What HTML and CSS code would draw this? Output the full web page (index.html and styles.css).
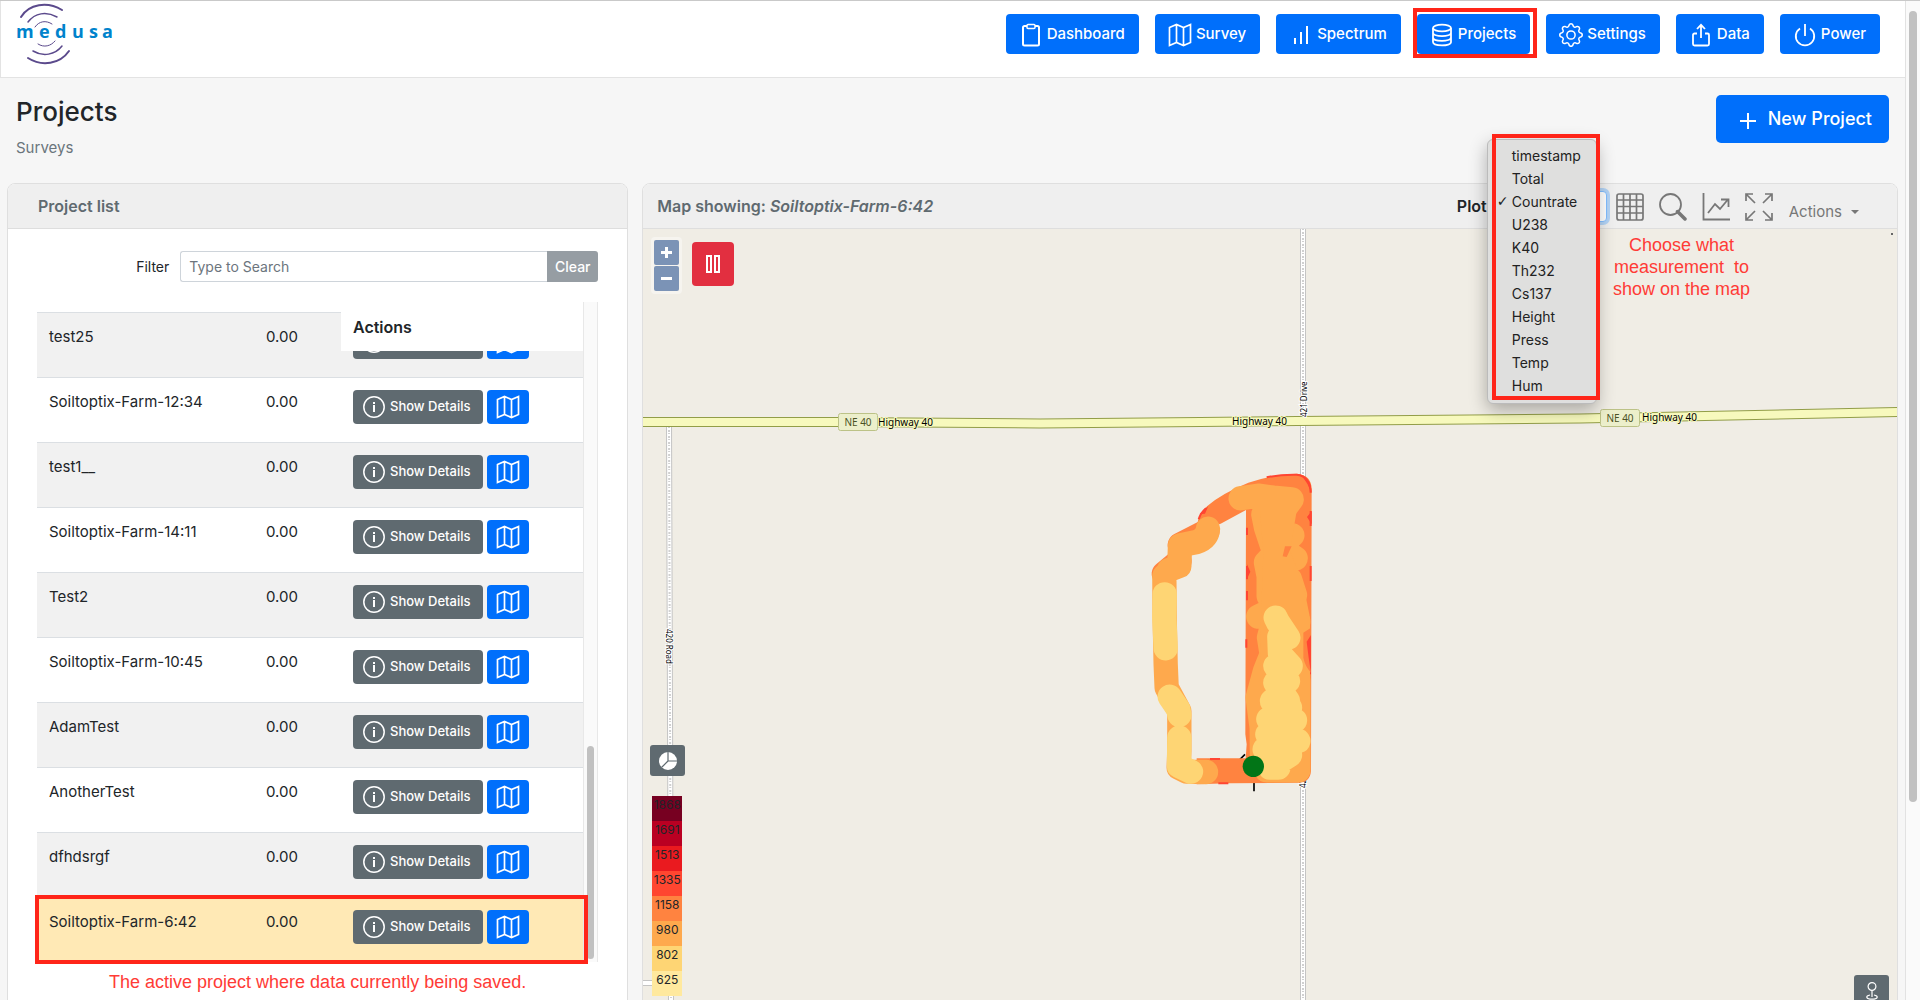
FILE: index.html
```html
<!DOCTYPE html>
<html lang="en">
<head>
<meta charset="utf-8">
<title>Projects</title>
<link rel="stylesheet" href="styles.css">
</head>
<body>
<svg width="0" height="0" class="defs" aria-hidden="true">
  <symbol id="i-map" viewBox="0 0 24 24"><path d="M1.5 4.5 8.5 1.5 15.5 4.5 22.500 1.500V19.500L15.500 22.500 8.500 19.500 1.500 22.500ZM8.500 1.500V19.500M15.500 4.500V22.500" fill="none" stroke="currentColor" stroke-width="1.700"/></symbol>
  <symbol id="i-info" viewBox="0 0 22 22"><circle cx="11" cy="11" r="10.200" fill="none" stroke="currentColor" stroke-width="1.500"/><path d="M10 9h2v7h-2zM10 6h2v2h-2z" fill="currentColor"/></symbol>
</svg>
<div class="window">
<div class="page">
  <header class="topbar">
    <a href="#" class="logo" aria-label="medusa">
      <svg width="104" height="64" viewBox="12 2 104 64">
        <g fill="none" stroke="#5b4a8c" stroke-linecap="round">
          <path d="M21 17C29 4 47 1 62 10" stroke-width="2"/>
          <path d="M28 22C35 13 46 11 57 17" stroke-width="1.500"/>
          <path d="M35 27C39 21 46 20 52 24" stroke-width="1"/>
          <path d="M38 44C44 48 51 46 55 41" stroke-width="1"/>
          <path d="M33 51C43 57 55 55 62 46" stroke-width="1.500"/>
          <path d="M28 58C42 67 60 64 69 51" stroke-width="2"/>
        </g>
        <text class="logo-text" x="16 39 55 72 89 102" y="38">medusa</text>
      </svg>
    </a>
    <nav class="nav">
      <a href="#" class="btn nav-btn"><svg width="24" height="24" viewBox="0 0 24 24"><path d="M8 3H5.500A1.500 1.500 0 0 0 4 4.500V21a1.500 1.500 0 0 0 1.500 1.500h13A1.500 1.500 0 0 0 20 21V4.500A1.500 1.500 0 0 0 18.500 3H16" fill="none" stroke="currentColor" stroke-width="2"/><rect x="8" y="1.500" width="8" height="4" rx="1" fill="none" stroke="currentColor" stroke-width="1.500"/></svg><span>Dashboard</span></a>
      <a href="#" class="btn nav-btn"><svg width="24" height="24"><use href="#i-map"/></svg><span>Survey</span></a>
      <a href="#" class="btn nav-btn"><svg width="24" height="24" viewBox="0 0 24 24"><path d="M6 15v6M12 9v12M18 3v18" stroke="currentColor" stroke-width="2"/></svg><span>Spectrum</span></a>
      <div class="nav-current">
        <a href="#" class="btn nav-btn"><svg width="24" height="24" viewBox="0 0 24 24"><g fill="none" stroke="currentColor" stroke-width="1.800"><ellipse cx="12" cy="5" rx="9" ry="3.400"/><path d="M3 5v14c0 4.500 18 4.500 18 0V5M3 9.700c0 4.500 18 4.500 18 0M3 14.400c0 4.500 18 4.500 18 0"/></g></svg><span>Projects</span></a>
        <span class="mark mark-nav"></span>
      </div>
      <a href="#" class="btn nav-btn"><svg width="24" height="24" viewBox="0 0 16 16" fill="currentColor"><path d="M8 4.754a3.246 3.246 0 1 0 0 6.492 3.246 3.246 0 0 0 0-6.492zM5.754 8a2.246 2.246 0 1 1 4.492 0 2.246 2.246 0 0 1-4.492 0z"/><path d="M9.796 1.343c-.527-1.790-3.065-1.790-3.592 0l-.094.319a.873.873 0 0 1-1.255.52l-.292-.16c-1.640-.892-3.433.902-2.540 2.541l.159.292a.873.873 0 0 1-.52 1.255l-.319.094c-1.790.527-1.790 3.065 0 3.592l.319.094a.873.873 0 0 1 .52 1.255l-.16.292c-.892 1.640.901 3.434 2.541 2.540l.292-.159a.873.873 0 0 1 1.255.52l.094.319c.527 1.790 3.065 1.790 3.592 0l.094-.319a.873.873 0 0 1 1.255-.52l.292.16c1.640.893 3.434-.902 2.540-2.541l-.159-.292a.873.873 0 0 1 .52-1.255l.319-.094c1.790-.527 1.790-3.065 0-3.592l-.319-.094a.873.873 0 0 1-.52-1.255l.16-.292c.893-1.640-.902-3.433-2.541-2.540l-.292.159a.873.873 0 0 1-1.255-.52l-.094-.319zm-2.633.283c.246-.835 1.428-.835 1.674 0l.094.319a1.873 1.873 0 0 0 2.693 1.115l.291-.16c.764-.415 1.600.42 1.184 1.185l-.159.292a1.873 1.873 0 0 0 1.116 2.692l.318.094c.835.246.835 1.428 0 1.674l-.319.094a1.873 1.873 0 0 0-1.115 2.693l.16.291c.415.764-.42 1.600-1.185 1.184l-.291-.159a1.873 1.873 0 0 0-2.693 1.116l-.094.318c-.246.835-1.428.835-1.674 0l-.094-.319a1.873 1.873 0 0 0-2.692-1.115l-.292.16c-.764.415-1.600-.42-1.184-1.185l.159-.291A1.873 1.873 0 0 0 1.945 8.930l-.319-.094c-.835-.246-.835-1.428 0-1.674l.319-.094A1.873 1.873 0 0 0 3.060 4.377l-.16-.292c-.415-.764.42-1.600 1.185-1.184l.292.159a1.873 1.873 0 0 0 2.692-1.115l.094-.319z"/></svg><span>Settings</span></a>
      <a href="#" class="btn nav-btn"><svg width="24" height="24" viewBox="0 0 24 24"><path d="M8 10.500H5.500A1.500 1.500 0 0 0 4 12v9a1.500 1.500 0 0 0 1.500 1.500h13A1.500 1.500 0 0 0 20 21v-9a1.500 1.500 0 0 0-1.500-1.500H16M12 15V2M8 6l4-4.200L16 6" fill="none" stroke="currentColor" stroke-width="1.800"/></svg><span>Data</span></a>
      <a href="#" class="btn nav-btn"><svg width="24" height="24" viewBox="0 0 24 24"><path d="M7 5.500A9.200 9.200 0 1 0 17 5.500M12 1v12" fill="none" stroke="currentColor" stroke-width="1.800"/></svg><span>Power</span></a>
    </nav>
  </header>

  <div class="title-row">
    <div>
      <h1>Projects</h1>
      <p class="subtitle">Surveys</p>
    </div>
    <button type="button" class="btn new-btn"><svg width="24" height="24" viewBox="0 0 24 24"><path d="M12 4v16M4 12h16" stroke="currentColor" stroke-width="2"/></svg><span>New Project</span></button>
  </div>

  <main class="columns">
    <section class="card">
      <div class="card-head list-head"><h2>Project list</h2></div>
      <div class="list-body">
        <form class="filter">
          <label for="filter">Filter</label>
          <input id="filter" type="text" placeholder="Type to Search">
          <button type="button">Clear</button>
        </form>
        <div class="table-area">
          <div class="table-wrap">
            <table>
              <colgroup><col class="c-name"><col class="c-size"><col></colgroup>
              <thead><tr><td></td><td></td><th scope="col"><div class="sticky-head">Actions</div></th></tr></thead>
              <tbody>
                <tr><td>test25</td><td>0.00</td><td><div class="row-actions"><button type="button" class="details"><svg width="22" height="22"><use href="#i-info"/></svg><span>Show Details</span></button><button type="button" class="map-btn" aria-label="Map"><svg width="24" height="24"><use href="#i-map"/></svg></button></div></td></tr>
                <tr><td>Soiltoptix-Farm-12:34</td><td>0.00</td><td><div class="row-actions"><button type="button" class="details"><svg width="22" height="22"><use href="#i-info"/></svg><span>Show Details</span></button><button type="button" class="map-btn" aria-label="Map"><svg width="24" height="24"><use href="#i-map"/></svg></button></div></td></tr>
                <tr><td>test1__</td><td>0.00</td><td><div class="row-actions"><button type="button" class="details"><svg width="22" height="22"><use href="#i-info"/></svg><span>Show Details</span></button><button type="button" class="map-btn" aria-label="Map"><svg width="24" height="24"><use href="#i-map"/></svg></button></div></td></tr>
                <tr><td>Soiltoptix-Farm-14:11</td><td>0.00</td><td><div class="row-actions"><button type="button" class="details"><svg width="22" height="22"><use href="#i-info"/></svg><span>Show Details</span></button><button type="button" class="map-btn" aria-label="Map"><svg width="24" height="24"><use href="#i-map"/></svg></button></div></td></tr>
                <tr><td>Test2</td><td>0.00</td><td><div class="row-actions"><button type="button" class="details"><svg width="22" height="22"><use href="#i-info"/></svg><span>Show Details</span></button><button type="button" class="map-btn" aria-label="Map"><svg width="24" height="24"><use href="#i-map"/></svg></button></div></td></tr>
                <tr><td>Soiltoptix-Farm-10:45</td><td>0.00</td><td><div class="row-actions"><button type="button" class="details"><svg width="22" height="22"><use href="#i-info"/></svg><span>Show Details</span></button><button type="button" class="map-btn" aria-label="Map"><svg width="24" height="24"><use href="#i-map"/></svg></button></div></td></tr>
                <tr><td>AdamTest</td><td>0.00</td><td><div class="row-actions"><button type="button" class="details"><svg width="22" height="22"><use href="#i-info"/></svg><span>Show Details</span></button><button type="button" class="map-btn" aria-label="Map"><svg width="24" height="24"><use href="#i-map"/></svg></button></div></td></tr>
                <tr><td>AnotherTest</td><td>0.00</td><td><div class="row-actions"><button type="button" class="details"><svg width="22" height="22"><use href="#i-info"/></svg><span>Show Details</span></button><button type="button" class="map-btn" aria-label="Map"><svg width="24" height="24"><use href="#i-map"/></svg></button></div></td></tr>
                <tr><td>dfhdsrgf</td><td>0.00</td><td><div class="row-actions"><button type="button" class="details"><svg width="22" height="22"><use href="#i-info"/></svg><span>Show Details</span></button><button type="button" class="map-btn" aria-label="Map"><svg width="24" height="24"><use href="#i-map"/></svg></button></div></td></tr>
                <tr class="active"><td>Soiltoptix-Farm-6:42</td><td>0.00</td><td><div class="row-actions"><button type="button" class="details"><svg width="22" height="22"><use href="#i-info"/></svg><span>Show Details</span></button><button type="button" class="map-btn" aria-label="Map"><svg width="24" height="24"><use href="#i-map"/></svg></button></div></td></tr>
              </tbody>
            </table>
          </div>
          <div class="track"><div class="thumb"></div></div>
          <span class="mark mark-row"></span>
        </div>
        <p class="note">The active project where data currently being saved.</p>
      </div>
    </section>

    <section class="card">
      <div class="card-head map-head">
        <h2>Map showing: <em>Soiltoptix-Farm-6:42</em></h2>
        <div class="tools">
          <label for="plot">Plot</label>
          <div class="plot">
            <select id="plot"><option>Countrate</option></select>
            <ul class="menu">
              <li>timestamp</li><li>Total</li><li class="checked">Countrate</li><li>U238</li><li>K40</li><li>Th232</li><li>Cs137</li><li>Height</li><li>Press</li><li>Temp</li><li>Hum</li>
            </ul>
            <span class="mark mark-menu"></span>
          </div>
          <div class="tool-icons">
            <button type="button" aria-label="Table"><svg width="28" height="28" viewBox="0 0 28 28"><g fill="none" stroke="currentColor" stroke-width="1.700"><rect x="1" y="1" width="26" height="26" rx="2"/><path d="M1 7h26M1 13.500h26M1 20h26M7.500 1v26M14 1v26M20.500 1v26"/></g></svg></button>
            <button type="button" aria-label="Zoom"><svg width="28" height="28" viewBox="0 0 28 28"><circle cx="11.500" cy="11.500" r="10.500" fill="none" stroke="currentColor" stroke-width="1.800"/><path d="M18.500 18.500 26 26" stroke="currentColor" stroke-width="3.500" stroke-linecap="round"/></svg></button>
            <button type="button" aria-label="Chart"><svg width="28" height="28" viewBox="0 0 28 28"><path d="M1.500 0v26.500H28M6 20l7-9 5 5 7.500-9M19 6.500h7.500V14" fill="none" stroke="currentColor" stroke-width="1.800"/></svg></button>
            <button type="button" aria-label="Fullscreen"><svg width="28" height="28" viewBox="0 0 28 28"><path d="M1 8V1h7M1 1l9 9M20 1h7v7M27 1l-9 9M1 20v7h7M1 27l9-9M20 27h7v-7M27 27l-9-9" fill="none" stroke="currentColor" stroke-width="1.700"/></svg></button>
          </div>
          <button type="button" class="actions-menu">Actions</button>
        </div>
      </div>
      <div class="map">
        <svg class="map-svg" height="772" viewBox="643 228 1254 772" preserveAspectRatio="xMinYMin slice">
          <g class="lane">
            <path class="lane-edge" d="M1303 228V1000M669 420 671 1000M643 982h9"/>
            <path class="lane-fill" d="M1303 228V1000M669 420 671 1000M643 982h9"/>
            <path class="lane-dots" d="M1303 228V1000M669 420 671 1000"/>
          </g>
          <path d="M640 421 840 421 1040 422.500 1200 421 1580 417.500 1900 411" fill="none" stroke="#929d48" stroke-width="10"/>
          <path d="M640 421 840 421 1040 422.500 1200 421 1580 417.500 1900 411" fill="none" stroke="#f7f9bd" stroke-width="8"/>
          <g class="shield"><rect x="838.500" y="412.500" width="39" height="17" rx="2"/><rect x="1600.500" y="408.500" width="39" height="17" rx="2"/></g>
          <g class="shield-text"><text x="858" y="425">NE 40</text><text x="1620" y="421">NE 40</text></g>
          <g class="road-name">
            <text x="878" y="425">Highway 40</text><text x="1232" y="424">Highway 40</text><text x="1642" y="420">Highway 40</text>
          </g>
          <g class="lane-name">
            <text transform="translate(1307 416) rotate(-90)">421 Drive</text>
            <text transform="translate(666 628) rotate(90)">420 Road</text>
            <text transform="translate(1306 787) rotate(-90)">42</text>
          </g>
          <rect x="1891" y="232" width="2" height="2" fill="#666"/>
          <svg x="1130" y="450" width="220" height="360" viewBox="0 0 660 1080">
            <path d="M372 960V1021M345 910 325 930" stroke="#000" stroke-width="5"/>
            <path fill="#ff8340" d="M200 235Q200 195 232 165 270 130 355 95 430 70 500 68 545 72 545 115L543 960Q540 995 505 995L300 997 200 1000V922H347L350 880 346 850 348 177 272 218Z"/>
            <path fill="none" stroke="#ff4532" stroke-width="6" d="M206 205Q212 185 228 172M410 79Q450 70 500 71 540 75 542 125M542 180V225M542 345V390M351 230V252M351 345V385M351 420V448M349 565V590M540 550V670M240 924H270M265 997H295"/>
            <path fill="#ff4532" d="M208 190 235 165 225 188ZM515 73Q545 85 545 125Q535 100 515 73ZM545 180 531 198 545 220ZM351 340 361 362 351 384ZM542 555 529 572 542 640Z"/>
            <g fill="none" stroke="#ff8340" stroke-width="74" stroke-linecap="round" stroke-linejoin="round"><path d="M150 282 232 240M102 368 148 330"/></g>
            <g fill="none" stroke="#fea94d" stroke-width="73" stroke-linecap="round" stroke-linejoin="round">
              <path d="M234 233Q232 262 200 273L150 283 148 345 117 357M103 375 104 500 107 640 110 710 148 780 148 900 146 950 170 962 228 963"/>
              <path d="M332 142 384 134 430 140 485 145 465 172 400 190 408 230 428 290 487 253M497 322 450 290 408 335 416 375 416 435 480 385 495 432 440 470 385 497M505 512 430 510 417 560 425 610 405 660 383 740 395 830 396 930 410 958 505 958 505 690 480 560M505 850V958"/>
            </g>
            <path fill="#fea94d" d="M390 180H500L480 300 520 400 540 500V960H400L390 600 400 300Z"/>
            <path fill="#ff8340" d="M520 545 543 530V665Q525 645 520 620ZM465 286 485 286 470 318 458 316Z"/>
            <path fill="#ff4532" d="M543 552 530 572 536 620 543 668Z"/>
            <g fill="none" stroke="#fed574" stroke-width="73" stroke-linecap="round" stroke-linejoin="round">
              <path d="M104 430 103 500 107 592M119 737 145 775 148 792M148 860 147 945 183 962"/>
              <path d="M437 500 443 512 475 560 448 558 450 610 482 645 436 645 474 690 436 695 474 750 426 750 480 770 415 805 495 808 412 850 505 870 404 895 480 912 420 950 445 950"/>
            </g>
            <circle cx="370" cy="946" r="32" fill="#027517"/>
          </svg>
        </svg>
        <div class="zoom-ctl"><button type="button" aria-label="Zoom in"><svg width="11" height="11" viewBox="0 0 11 11"><path d="M0 5.500h11M5.500 0v11" stroke="#fff" stroke-width="3"/></svg></button><button type="button" aria-label="Zoom out"><svg width="11" height="11" viewBox="0 0 11 11"><path d="M0 5.500h11" stroke="#fff" stroke-width="3"/></svg></button></div>
        <button type="button" class="pause" aria-label="Pause"><svg width="14" height="18" viewBox="0 0 14 18"><path d="M1 1h4v16H1zM9 1h4v16H9z" fill="none" stroke="#fff" stroke-width="2"/></svg></button>
        <p class="note map-note">Choose what<br>measurement&nbsp; to<br>show on the map</p>
        <button type="button" class="grey-btn pie" aria-label="Legend"><svg width="18" height="18" viewBox="0 0 18 18"><circle cx="9" cy="9" r="9" fill="#fff"/><path d="M9 0v9h9M9 9 2.500 15.500" fill="none" stroke="#5f6a70" stroke-width="1.200"/></svg></button>
        <ol class="legend"><li>1868</li><li>1691</li><li>1513</li><li>1335</li><li>1158</li><li>980</li><li>802</li><li>625</li></ol>
        <button type="button" class="grey-btn pin" aria-label="Position"><svg width="12" height="18" viewBox="0 0 12 18"><g fill="none" stroke="#fff" stroke-width="1.200"><circle cx="6" cy="4.500" r="3.900"/><path d="M6 8.500V15M4 13C-1 14 0 17.200 6 17.200S13 14 8 13"/></g></svg></button>
      </div>
    </section>
  </main>
</div>
<div class="page-track"><div class="page-thumb"></div></div>
</div>
</body>
</html>
```
FILE: styles.css
```css
* { box-sizing: border-box; }
body {
  margin: 0;
  font: 16px/24px Inter, "Liberation Sans", sans-serif;
  color: #212529;
  background: #f6f6f6;
}
h1, h2, p, ul, ol { margin: 0; padding: 0; }
ul, ol { list-style: none; }
button, input, select { font: inherit; }
button { border: 0; padding: 0; cursor: pointer; }
svg { display: block; flex: none; }
.defs { position: absolute; }

.window { display: flex; height: 100vh; overflow: hidden; border-top: 1px solid #c9c9c9; }
.page { flex: 1; min-width: 0; }
.page-track { width: 15px; background: #fafafa; border-left: 1px solid #e2e2e2; padding: 10px 3px 0; }
.page-thumb { height: 80%; border-radius: 4px; background: #c1c1c1; }

.topbar {
  display: flex;
  justify-content: space-between;
  align-items: flex-start;
  height: 77px;
  padding: 1px 25px 0 11px;
  background: #fff;
  border-bottom: 1px solid #e3e3e3;
  border-left: 1px solid #e3e3e3;
}
.logo-text { font: bold 18px "Open Sans", sans-serif; fill: #0083cc; }
.nav { display: flex; gap: 16px; padding-top: 12px; }
.nav-current { position: relative; }
.btn {
  display: flex;
  align-items: center;
  color: #fff;
  background: #006ffb;
  border-radius: 4px;
  text-decoration: none;
  white-space: nowrap;
}
.nav-btn { height: 40px; padding: 0 14px 0 13px; gap: 4px; font-size: 15px; font-weight: 500; }
.nav-btn svg { margin-top: 2px; }
.nav-btn span { padding-bottom: 1px; }
.mark { position: absolute; border: 4px solid #ff2519; pointer-events: none; }
.mark-nav { inset: -6px -7px -4px -4px; }

.title-row {
  display: flex;
  justify-content: space-between;
  align-items: flex-start;
  height: 105px;
  padding: 17px 16px 0;
}
h1 { font-size: 26px; line-height: 34px; font-weight: 500; }
.subtitle { margin-top: 7px; font-size: 15px; color: #6a757c; }
.new-btn { height: 48px; padding: 0 17px 0 20px; gap: 8px; font-size: 18px; font-weight: 500; border-radius: 5px; }
.new-btn svg { margin-top: 4px; }

.columns { display: grid; grid-template-columns: 331fr 669fr; gap: 14px; padding: 0 7px; }
.card {
  min-width: 0;
  background: #fff;
  border: 1px solid #dfdfdf;
  border-radius: 8px 8px 0 0;
  min-height: 880px;
}
.card-head {
  display: flex;
  align-items: center;
  height: 45px;
  background: #efefef;
  border-bottom: 1px solid #dedede;
  border-radius: 7px 7px 0 0;
}
h2 { font-size: 16px; line-height: 24px; font-weight: 600; color: #5f6a70; }
.list-head { padding-left: 30px; }
.list-body { padding: 22px 29px 0; }

.filter { display: flex; font-size: 14px; justify-content: flex-end; }
.filter label { line-height: 31px; padding-right: 11px; }
.filter input {
  width: 367px;
  height: 31px;
  padding: 0 8px;
  border: 1px solid #ced4da;
  border-right: 0;
  border-radius: 3px 0 0 3px;
  background: #fff;
}
.filter input::placeholder { color: #6c757d; opacity: 1; }
.filter button { width: 51px; color: #fff; background: #969da3; border-radius: 0 3px 3px 0; font-weight: 500; }

.table-area { position: relative; display: flex; margin-top: 20px; }
.table-wrap { flex: 1; }
table { width: 100%; border-collapse: separate; border-spacing: 0; table-layout: fixed; }
.c-name { width: 217px; }
.c-size { width: 87px; }
thead td, thead th { height: 10px; padding: 0; position: relative; }
.sticky-head {
  position: absolute;
  z-index: 1;
  inset: 0 0 auto 0;
  height: 49px;
  padding: 13px 12px 0;
  text-align: left;
  font-size: 16px;
  font-weight: 600;
  background: #fff;
}
tbody td { height: 65px; padding: 12px; vertical-align: top; border-top: 1px solid #dbdfe3; font-size: 15px; white-space: nowrap; }
tbody tr:nth-child(odd) { background: #f1f1f1; }
tbody tr.active { background: #ffe9b5; }
.row-actions { display: flex; gap: 4px; }
.details, .map-btn { display: flex; align-items: center; height: 34px; border-radius: 4px; color: #fff; }
.details { width: 130px; padding: 0 10px; gap: 5px; font-size: 13px; font-weight: 500; background: #5f6a70; }
.details span { padding-bottom: 2px; }
.map-btn { width: 42px; justify-content: center; background: #006ffb; }
.track { width: 15px; background: #fafafa; border: 1px solid #e8e8e8; border-width: 0 1px; position: relative; }
.thumb { position: absolute; left: 3px; right: 3px; bottom: 3px; height: 213px; border-radius: 4px; background: #c1c1c1; }
.mark-row { left: -2px; right: 10px; bottom: -2px; height: 69px; }
.note { font: 18px/22px "Liberation Sans", sans-serif; color: #ff3b36; text-align: center; }
.list-body .note { margin-top: 9px; }

.map-head { justify-content: space-between; padding: 0 38px 0 14px; }
.tools { display: flex; align-items: center; }
.tools label { font-weight: 600; font-size: 16px; padding-right: 8px; }
.plot { position: relative; }
.plot select {
  display: block;
  width: 112px;
  height: 31px;
  border: 1px solid #80bdff;
  border-radius: 4px;
  background: #fff;
  color: #495057;
  appearance: none;
  box-shadow: 0 0 0 3px #b3d3f5;
}
.menu {
  position: absolute;
  z-index: 2;
  left: -8px;
  top: -52px;
  width: 110px;
  padding: 4px 0 6px;
  font-size: 14px;
  line-height: 23px;
  color: #222;
  background: #dfdfde;
  border: 1px solid #bbb;
  border-radius: 6px;
  box-shadow: 0 6px 18px rgba(0, 0, 0, .3);
}
.menu li { padding-left: 24px; position: relative; }
.menu .checked::before { content: "✓"; position: absolute; left: 9px; font-family: "DejaVu Sans", sans-serif; }
.mark-menu { z-index: 3; left: -3px; top: -57px; width: 108px; height: 266px; }
.tool-icons { display: flex; gap: 15px; padding: 2px 16px 0 9px; }
.tool-icons button, .actions-menu { background: none; color: #777; }
.actions-menu { display: flex; align-items: center; gap: 9px; font-size: 15px; padding-top: 11px; }
.actions-menu::after { content: ""; border: 4px solid transparent; border-top-color: #777; border-bottom: 0; }

.map { position: relative; height: 772px; background: #f0ede5; overflow: hidden; }
.map-svg { width: 100%; }
.lane path { fill: none; }
.lane .lane-edge { stroke: #c4c4c4; stroke-width: 6; }
.lane .lane-fill { stroke: #fff; stroke-width: 4; }
.lane .lane-dots { stroke: #d0d0d0; stroke-width: 2; stroke-dasharray: 1 2 2 1; }
.shield rect { fill: #ecefcb; stroke: #bcc287; }
.shield-text { font: 10px "Noto Sans", sans-serif; fill: #4b5224; text-anchor: middle; }
.road-name, .lane-name { font: 10px "Noto Sans", sans-serif; fill: #000; paint-order: stroke; stroke: #f7f9bd; stroke-width: 2px; }
.lane-name { font-size: 8px; stroke: #fff; }
.zoom-ctl { position: absolute; left: 8px; top: 8px; display: grid; gap: 1px; padding: 3px; background: rgba(255, 255, 255, .4); border-radius: 4px; }
.zoom-ctl button { width: 25px; height: 25px; display: grid; place-items: center; background: #7b93b6; border-radius: 2px; }
.pause { position: absolute; left: 49px; top: 13px; width: 42px; height: 44px; display: grid; place-items: center; background: #e22f40; border-radius: 4px; }
.map-note { position: absolute; right: 147px; top: 5px; white-space: nowrap; }
.grey-btn { position: absolute; width: 35px; height: 31px; display: grid; place-items: center; background: #5f6a70; border-radius: 3px; }
.pie { left: 7px; top: 516px; }
.pin { right: 8px; top: 746px; }
.legend { position: absolute; left: 9px; top: 567px; width: 30px; font-size: 12px; line-height: 18px; text-align: center; }
.legend li { height: 25px; }
.legend li:nth-child(1) { background: #770021; }
.legend li:nth-child(2) { background: #ba0022; }
.legend li:nth-child(3) { background: #ea1a1f; }
.legend li:nth-child(4) { background: #ff4630; }
.legend li:nth-child(5) { background: #ff8340; }
.legend li:nth-child(6) { background: #fea94d; }
.legend li:nth-child(7) { background: #fed574; }
.legend li:nth-child(8) { background: #ffe99e; }
```
